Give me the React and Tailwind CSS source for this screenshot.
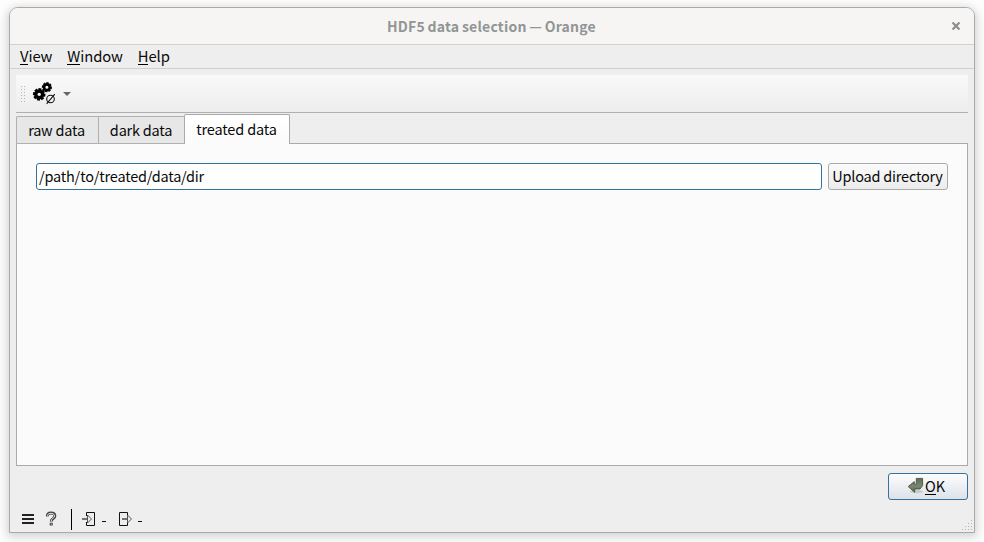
import React from "react";

function GearShape({ cx, cy, r, hole }) {
  const teeth = [0, 45, 90, 135, 180, 225, 270, 315];
  return (
    <g transform={`translate(${cx} ${cy})`}>
      {teeth.map((a) => (
        <rect key={a} x={-r * 0.25} y={-r} width={r * 0.5} height={r * 0.5} transform={`rotate(${a + 8})`} fill="#000" />
      ))}
      <circle r={(r * 0.8 + hole) / 2} fill="none" stroke="#000" strokeWidth={r * 0.8 - hole} />
    </g>
  );
}

function GearsIcon() {
  return (
    <svg width="24" height="24" viewBox="32 81 24 24" className="block">
      <GearShape cx={39.2} cy={94.4} r={6.2} hole={1.7} />
      <GearShape cx={46.9} cy={87.2} r={5} hole={1.5} />
      <circle cx="50.5" cy="99" r="3.8" fill="#f4f4f4" stroke="#111" strokeWidth="1.1" />
      <path d="M46.6 103.8 54.8 94.2" stroke="#111" strokeWidth="1.1" />
    </svg>
  );
}

function Dots({ points, ...rest }) {
  return (
    <svg {...rest}>
      {points.map(([x, y]) => (
        <rect key={`${x}-${y}`} x={x} y={y} width="1" height="1" fill="#b4b4b4" />
      ))}
    </svg>
  );
}

const handleDots = [0, 1, 2, 3, 4, 5].flatMap((i) => [[0, i * 3], [3, i * 3]]);
const gripDots = [[9, 0], [6, 3], [9, 3], [3, 6], [6, 6], [9, 6], [0, 9], [3, 9], [6, 9], [9, 9]];

function MenuItem({ first, rest, className }) {
  return (
    <span className={className}>
      <span className="inline-block h-[19px] border-b border-black leading-[20px]">{first}</span>
      {rest}
    </span>
  );
}

export default function App() {
  return (
    <div className="h-[542px] w-[984px] overflow-hidden bg-[#fdfdfd] pl-[9px] pt-[7px] font-['Noto_Sans_CJK_SC',sans-serif] text-[14.5px] leading-[20px] tracking-[-0.22px] text-[#0a0a0a]">
      <div className="flex h-[526px] w-[966px] flex-col overflow-hidden rounded-t-[9px] border border-[#a9a9a9] bg-[#eeeeee] shadow-[0_2px_10px_2px_rgba(0,0,0,0.17)]">
        <header className="relative flex h-[37px] shrink-0 items-center justify-center border-b border-[#d5d0cc] bg-[#f6f5f4] font-bold text-[#929595]">
          <span className="whitespace-nowrap pr-px text-[14px] tracking-[0.22px] [word-spacing:-0.8px]">HDF5 data selection — Orange</span>
          <svg className="absolute left-[942px] top-[14px]" width="8" height="8" viewBox="0 0 8 8">
            <path d="M.5.5 7.5 7.5M7.5.5.5 7.5" stroke="#8b8e8e" strokeWidth="2.2" />
          </svg>
        </header>
        <nav className="flex h-[24px] shrink-0 items-start gap-[15px] border-b border-[#d0d0d0] pl-[10px] pt-[1px] text-[14.8px] tracking-[-0.1px]">
          <MenuItem first="V" rest="iew" />
          <MenuItem first="W" rest="indow" />
          <MenuItem first="H" rest="elp" />
        </nav>
        <div className="mx-[6px] mt-[6px] flex h-[38px] shrink-0 items-start border-b border-[#b0b0b0] bg-gradient-to-b from-[#f9f9f9] to-[#ededed]">
          <Dots points={handleDots} width="4" height="16" className="ml-[5px] mt-[11px]" />
          <div className="ml-[7px] mt-[6px]"><GearsIcon /></div>
          <svg width="8" height="4" viewBox="0 0 8 4" className="ml-[7px] mt-[17px]"><path d="M0 0h8L4 4Z" fill="#666" /></svg>
        </div>
        <div className="mx-[6px] mt-[1px] flex h-[30px] shrink-0 items-end">
          <div className="flex h-[28px] w-[82px] justify-center rounded-tl-[2px] border-l border-t border-b border-[#b0b0b0] bg-[#e7e7e7] pr-[2px] pt-[3px]">raw data</div>
          <div className="flex h-[28px] w-[86px] justify-center border-l border-t border-b border-[#b0b0b0] bg-[#e7e7e7] pr-px pt-[3px]">dark data</div>
          <div className="flex h-[30px] w-[106px] justify-center rounded-t-[2px] border-l border-r border-t border-[#aaa] bg-gradient-to-b from-white to-[#fbfbfb] pr-px pt-[4px] tracking-[-0.15px]">treated data</div>
          <div className="h-px grow bg-[#aaa]" />
        </div>
        <main className="mx-[6px] flex h-[322px] shrink-0 items-start gap-[6px] border-x border-b border-[#aaa] bg-[#fbfbfb] pl-[19px] pt-[19px]">
          <div className="flex h-[27px] w-[786px] rounded-[3px] border border-[#33729c] bg-white pl-[2px] pt-[2px]">/path/to/treated/data/dir</div>
          <button className="flex h-[27px] w-[120px] justify-center whitespace-nowrap rounded-[3px] border border-[#aaa] bg-gradient-to-b from-[#fbfbfb] to-[#ececec] pr-px pt-[2px]">Upload directory</button>
        </main>
        <div className="flex shrink-0 justify-end pr-[6px] pt-[7px]">
          <button className="flex h-[27px] w-[80px] rounded-[3px] border border-[#33729c] bg-gradient-to-b from-[#fdfdfe] to-[#dce2e9] pl-[18px] pt-[2px]">
            <svg width="18" height="18" viewBox="0 0 18 18" className="mt-px block">
              <defs>
                <linearGradient id="ret" x1="0" x2="0" y1="0" y2="1"><stop offset="0" stopColor="#5f6c56" /><stop offset=".55" stopColor="#788970" /><stop offset="1" stopColor="#56664b" /></linearGradient>
              </defs>
              <ellipse cx="9.5" cy="14.6" rx="6.5" ry="1.7" fill="#c5cbcc" />
              <path d="M9.3 1.4h6.3v7.2L13 12H7.7v3.3L1.2 9.6 7.3 4.6V7.2h2Z" fill="url(#ret)" stroke="#3c4638" strokeWidth=".8" />
            </svg>
            <MenuItem first="O" rest="K" className="tracking-normal" />
          </button>
        </div>
        <footer className="flex grow items-end">
          <svg width="150" height="32" viewBox="10 500 150 32" className="block" fill="none">
            <path d="M22 515h12M22 519h12M22 523h12" stroke="#222" strokeWidth="2" />
            <path d="M47.4 516.4q-.4-3.4 3.6-3.4t3.8 3q0 1.8-1.8 2.8t-1.7 2.7M51.2 522.8v2.6" stroke="#444" strokeWidth="3" />
            <path d="M47.4 515.8q.2-2.5 3.6-2.5t3.6 2.6q0 1.5-1.7 2.5t-1.6 2.7M51.2 523.6v1" stroke="#e2e2e2" strokeWidth="1" />
            <path d="M71.5 509v21" stroke="#000" />
            <path d="M86.5 516v-3.5h8v13h-8V522" stroke="#111" />
            <path d="M82 519h6" stroke="#666" strokeWidth="1.8" />
            <path d="m87.5 515 4 4-4 4Z" fill="#eee" stroke="#555" />
            <path d="M127.5 516v-3.5h-8v13h8V522" stroke="#111" />
            <path d="M122 519h6" stroke="#666" strokeWidth="1.8" />
            <path d="m127.5 515 4 4-4 4Z" fill="#eee" stroke="#555" />
            <path d="M102 521.5h4M138 521.5h4" stroke="#111" />
          </svg>
          <Dots points={gripDots} width="10" height="10" className="mb-[2px] ml-auto mr-[2px]" />
        </footer>
      </div>
    </div>
  );
}
